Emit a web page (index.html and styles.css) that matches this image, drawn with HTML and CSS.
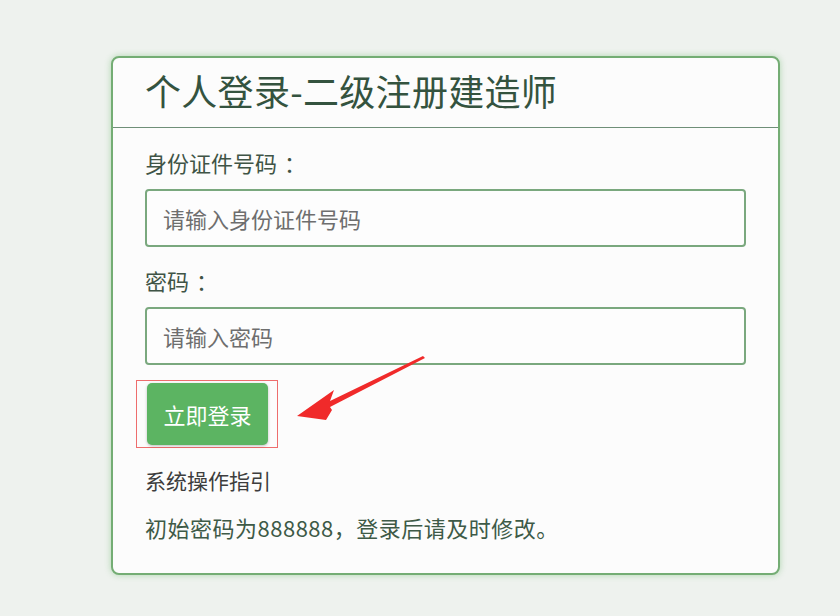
FILE: index.html
```html
<!DOCTYPE html>
<html lang="zh-CN">
<head>
    <meta charset="UTF-8">
    <meta name="viewport" content="width=device-width, initial-scale=1.0">
    <title>个人登录-二级注册建造师</title>
    <link rel="stylesheet" href="styles.css">
</head>
<body>
    <div class="login-card">
        <div class="card-header">
            <h1>个人登录-二级注册建造师</h1>
        </div>
        <form class="card-body">
            <div class="form-group">
                <label for="idno">身份证件号码<span class="colon">：</span></label>
                <input type="text" id="idno" placeholder="请输入身份证件号码">
            </div>
            <div class="form-group">
                <label for="pwd">密码<span class="colon">：</span></label>
                <input type="password" id="pwd" placeholder="请输入密码">
            </div>
            <div class="btn-row">
                <div class="mark-box">
                    <button type="button">立即登录</button>
                </div>
                <!-- red annotation arrow -->
                <svg class="arrow" width="140" height="70" viewBox="0 0 140 70">
                    <polygon points="137,2 44,47 48,36 11,62 40,66 46,56 44,53 139,4" fill="#f02a2a"/>
                </svg>
            </div>
            <a class="guide">系统操作指引</a>
            <p class="note">初始密码为888888，登录后请及时修改。</p>
        </form>
    </div>
</body>
</html>
```

FILE: styles.css
```css
* {
    margin: 0;
    padding: 0;
    box-sizing: border-box;
    font-family: "Noto Sans CJK SC", "Noto Sans", sans-serif;
}

body {
    background-color: #eef2ee;
    padding: 56px 0 0 111px;
    width: 840px;
    height: 616px;
    overflow: hidden;
}

.login-card {
    width: 669px;
    height: 519px;
    background-color: #fcfcfc;
    border: 2px solid #74ad74;
    border-radius: 8px;
    box-shadow: 0 0 6px rgba(100, 180, 100, 0.45);
}

.card-header {
    height: 70px;
    border-bottom: 1px solid #6f8f78;
    padding: 9px 0 0 32px;
}

h1 {
    font-size: 36px;
    font-weight: normal;
    color: #34533f;
    line-height: 46px;
    letter-spacing: 0.3px;
}

.card-body {
    padding: 19px 32px 0 32px;
    display: flex;
    flex-direction: column;
}

.form-group {
    display: flex;
    flex-direction: column;
    margin-bottom: 18px;
}

label {
    font-size: 22px;
    color: #3f5446;
    line-height: 30px;
    margin-bottom: 12px;
}

.colon {
    display: inline-block;
    margin-left: 7px;
}

input {
    width: 601px;
    height: 58px;
    border: 2px solid #7aa87e;
    border-radius: 4px;
    background-color: #fdfdfd;
    padding: 0 16px;
    font-size: 22px;
    color: #444;
}

input::placeholder {
    color: #6e6e6e;
}

.btn-row {
    position: relative;
    margin-top: -3px;
    margin-left: -9px;
}

.mark-box {
    width: 142px;
    height: 68px;
    border: 1px solid #ee6d6d;
    padding: 2px 0 0 10px;
}

button {
    width: 121px;
    height: 62px;
    background-color: #5cb462;
    color: #fff;
    border: none;
    border-radius: 5px;
    font-size: 22px;
    box-shadow: 0 1px 3px rgba(0, 0, 0, 0.25);
}

.arrow {
    position: absolute;
    left: 150px;
    top: -26px;
}

.guide {
    font-size: 21px;
    color: #3d3d3d;
    line-height: 30px;
    margin-top: 17px;
}

.note {
    font-size: 22px;
    color: #3e5a47;
    line-height: 30px;
    margin-top: 17px;
    letter-spacing: 0.5px;
}
```
